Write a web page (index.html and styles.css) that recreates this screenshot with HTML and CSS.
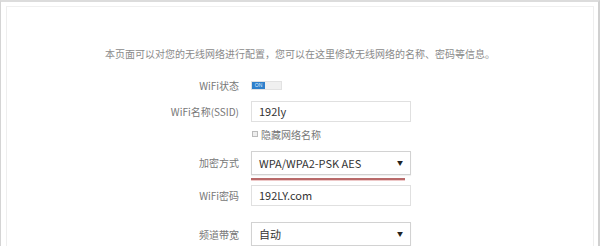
FILE: index.html
```html
<!DOCTYPE html>
<html lang="zh-CN">
<head>
  <meta charset="UTF-8" />
  <meta name="viewport" content="width=device-width, initial-scale=1.0" />
  <title>无线设置</title>
  <link rel="stylesheet" href="styles.css">
</head>
<body>
  <div class="frame">
    <div class="panel">
      <p class="intro">本页面可以对您的无线网络进行配置，您可以在这里修改无线网络的名称、密码等信息。</p>

      <div class="form">
        <div class="row row-toggle">
          <span class="label">WiFi状态</span>
          <span class="toggle"><span class="toggle-on">ON</span></span>
        </div>

        <div class="row row-ssid">
          <span class="label">WiFi名称(SSID)</span>
          <div class="field">192ly</div>
        </div>

        <div class="row row-check">
          <span class="label"></span>
          <label class="check"><span class="box"></span>隐藏网络名称</label>
        </div>

        <div class="row row-select">
          <span class="label">加密方式</span>
          <div class="cell">
            <div class="field select">WPA/WPA2-PSK AES<span class="arrow">▼</span></div>
            <div class="mark"></div>
          </div>
        </div>

        <div class="row row-pass">
          <span class="label">WiFi密码</span>
          <div class="field">192LY.com</div>
        </div>

        <div class="row row-band">
          <span class="label">频道带宽</span>
          <div class="field select">自动<span class="arrow">▼</span></div>
        </div>
      </div>
    </div>
  </div>
</body>
</html>
```

FILE: styles.css
```css
* {
  box-sizing: border-box;
}

body {
  margin: 0;
  background: #fff;
  font-family: "Noto Sans CJK SC", "Noto Sans", sans-serif;
  color: #666;
}

.frame {
  height: 246px;
  border-top: 2px solid #dcdcdc;
  border-left: 1px solid #d4d4d4;
  border-right: 2px solid #d0d0d0;
  padding: 4px 4px 0 5px;
  overflow: hidden;
}

.panel {
  height: 100%;
  border-top: 1px solid #f0f0f0;
  border-left: 1px solid #eee;
  border-right: 1px solid #eee;
}

.intro {
  margin: 40px 0 0;
  text-align: center;
  font-size: 10px;
  line-height: 14px;
  color: #8a8a8a;
}

.form {
  display: flex;
  flex-direction: column;
}

.row {
  display: flex;
  align-items: center;
  gap: 12px;
}

.label {
  width: 232px;
  flex-shrink: 0;
  text-align: right;
  font-size: 10px;
  color: #777;
}

.row-toggle {
  height: 12px;
  margin-top: 18px;
}

.row-ssid {
  margin-top: 10px;
}

.row-check {
  height: 14px;
  margin-top: 5px;
}

.row-select {
  margin-top: 10px;
  align-items: flex-start;
}

.row-select .label {
  line-height: 24px;
}

.row-pass {
  margin-top: 4px;
}

.row-band {
  margin-top: 16px;
}

.toggle {
  display: flex;
  width: 31px;
  height: 9px;
  background: #f0f0f0;
  border: 1px solid #e2e2e2;
}

.toggle-on {
  width: 13px;
  background: #2e7fcb;
  color: #dfeeff;
  font-family: "Liberation Sans", sans-serif;
  font-size: 5px;
  line-height: 7px;
  text-align: center;
}

.field {
  width: 160px;
  height: 21px;
  border: 1px solid #e0e0e0;
  padding: 0 7px;
  font-size: 11px;
  line-height: 19px;
  color: #333;
}

.select {
  display: flex;
  justify-content: space-between;
  height: 24px;
  line-height: 22px;
  border-color: #d2d2d2;
  box-shadow: 0 1px 1px rgba(0, 0, 0, 0.06);
}

.arrow {
  font-size: 6px;
  color: #222;
}

.mark {
  width: 154px;
  height: 3px;
  margin-top: 3px;
  background: #b86a6a;
  border-bottom: 1px solid #eec8c8;
}

.check {
  display: flex;
  align-items: center;
  gap: 3px;
  padding-left: 1px;
  font-size: 10px;
  color: #777;
}

.box {
  width: 6px;
  height: 6px;
  border: 1px solid #bbb;
  background: #eee;
}
```
